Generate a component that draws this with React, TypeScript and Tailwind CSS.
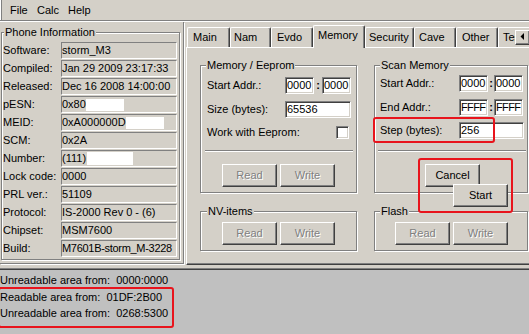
import React from "react";

const etched = "border border-[#808080] shadow-[inset_1px_1px_0_#fff,1px_1px_0_#fff]";

function RO({ children, cls = "" }: { children?: React.ReactNode; cls?: string }) {
  return (
    <div
      className={`w-[116px] h-[17px] shrink-0 border border-t-[#808080] border-l-[#808080] border-b-white border-r-white flex items-center whitespace-nowrap overflow-hidden ${cls}`}
    >
      {children}
    </div>
  );
}

function Row({ label, children, cls }: { label: string; children?: React.ReactNode; cls?: string }) {
  return (
    <div className="flex h-[17px] items-center">
      <span className="w-[59px] pl-[1px] shrink-0 whitespace-nowrap">{label}</span>
      <RO cls={cls}>{children}</RO>
    </div>
  );
}

function Edit({ w, children, cls = "" }: { w: string; children?: React.ReactNode; cls?: string }) {
  return (
    <div
      className={`${w} h-[17px] shrink-0 bg-white border border-t-[#808080] border-l-[#808080] border-b-white border-r-white shadow-[inset_1px_1px_0_#404040,inset_-1px_-1px_0_#d4d0c8] pl-[1px] flex items-center whitespace-nowrap overflow-hidden ${cls}`}
    >
      {children}
    </div>
  );
}

function Btn({ children, disabled }: { children: React.ReactNode; disabled?: boolean }) {
  return (
    <div
      className={`w-[55px] h-[23px] shrink-0 bg-[#d4d0c8] border border-t-white border-l-white border-b-[#404040] border-r-[#404040] shadow-[inset_-1px_-1px_0_#808080] flex items-center justify-center ${
        disabled ? "text-[#808080] [text-shadow:1px_1px_0_#ffffff]" : "text-black"
      }`}
    >
      {children}
    </div>
  );
}

function Tab({ w, pl, label, selected }: { w: string; pl: string; label: string; selected?: boolean }) {
  return (
    <div
      className={`${w} ${pl} shrink-0 bg-[#d4d0c8] border-t border-l border-white border-r border-r-[#404040] shadow-[inset_-1px_0_0_#808080] rounded-t-[2px] pt-[3px] whitespace-nowrap overflow-hidden ${
        selected ? "h-[23px] -mb-px relative z-10" : "h-[20px]"
      }`}
    >
      {label}
    </div>
  );
}

function Sep() {
  return <div className="-ml-[2px] w-[148px] h-[2px] border-t border-[#808080] border-b border-b-white" />;
}

function Mask({ w, h = "h-[12px]" }: { w: string; h?: string }) {
  return <span className={`block shrink-0 ${w} ${h} bg-white`} />;
}

export default function App() {
  return (
    <div className="relative w-[529px] h-[334px] overflow-hidden bg-[#d4d0c8] flex flex-col font-['Liberation_Sans',Arial,sans-serif] text-[11px] leading-[13px] text-black">
      {/* menu bar */}
      <div className="h-[20px] flex items-center shrink-0">
        <div className="w-[2px] h-[20px] border-l border-white border-r border-r-[#808080]" />
        <span className="ml-[8px] w-[27px]">File</span>
        <span className="w-[31px]">Calc</span>
        <span>Help</span>
      </div>
      <div className="h-px bg-[#808080] shrink-0" />
      <div className="h-px bg-white shrink-0" />

      {/* main area */}
      <div className="h-[246px] flex shrink-0">
        {/* left panel */}
        <div className="w-[184px] h-[242px] shrink-0 border-r border-b border-[#808080] shadow-[1px_1px_0_#fff]">
          <fieldset className={`ml-[1px] mt-[4px] w-[179px] h-[234px] ${etched}`}>
            <legend className="ml-[2px] px-[1px] bg-[#d4d0c8] leading-[13px]">Phone Information</legend>
            <div className="mt-[3px] flex flex-col gap-[1px]">
              <Row label="Software:">storm_M3</Row>
              <Row label="Compiled:">Jan 29 2009 23:17:33</Row>
              <Row label="Released:">Dec 16 2008 14:00:00</Row>
              <Row label="pESN:">
                <span className="shrink-0">0x80</span>
                <Mask w="w-[38px]" />
              </Row>
              <Row label="MEID:">
                <span className="shrink-0">0xA000000D</span>
                <Mask w="w-[38px]" />
              </Row>
              <Row label="SCM:">0x2A</Row>
              <Row label="Number:">
                <span className="shrink-0">(111)</span>
                <span className="block shrink-0 ml-[1px] w-[46px] h-[13px] bg-white" />
              </Row>
              <Row label="Lock code:">0000</Row>
              <Row label="PRL ver.:">51109</Row>
              <Row label="Protocol:">IS-2000 Rev 0 - (6)</Row>
              <Row label="Chipset:">MSM7600</Row>
              <Row label="Build:" cls="tracking-[-0.3px]">M7601B-storm_M-3228</Row>
            </div>
          </fieldset>
        </div>

        {/* tab control */}
        <div className="ml-[2px] flex flex-col w-[343px] shrink-0">
          <div className="relative h-[25px] flex items-end pl-[1px]">
            <Tab w="w-[43px]" pl="pl-[5px]" label="Main" />
            <Tab w="w-[41px]" pl="pl-[3px]" label="Nam" />
            <Tab w="w-[42px]" pl="pl-[5px]" label="Evdo" />
            <Tab w="w-[52px]" pl="pl-[4px]" label="Memory" selected />
            <Tab w="w-[49px]" pl="pl-[3px]" label="Security" />
            <Tab w="w-[42px]" pl="pl-[4px]" label="Cave" />
            <Tab w="w-[42px]" pl="pl-[5px]" label="Other" />
            <Tab w="w-[42px]" pl="pl-[4px]" label="Test" />
            <div className="absolute left-[329px] top-[8px] w-[15px] h-[15px] bg-[#d4d0c8] border border-t-white border-l-white border-b-[#404040] border-r-[#404040] shadow-[inset_-1px_-1px_0_#808080] z-20 flex items-center justify-center">
              <svg width="4" height="7" viewBox="0 0 4 7" className="-mt-[3px] -ml-[1px]">
                <polygon points="4,0 4,7 0.5,3.5" fill="#000" />
              </svg>
            </div>
          </div>
          <div className="h-[218px] w-[360px] border-t border-l border-white border-b border-b-[#404040] shadow-[inset_0_-1px_0_#808080]">
            <div className="flex pl-[13px] pt-[11px]">
              {/* Memory / Eeprom */}
              <fieldset className={`w-[157px] h-[134px] shrink-0 ${etched}`}>
                <legend className="ml-[5px] px-[1px] bg-[#d4d0c8] leading-[13px]">Memory / Eeprom</legend>
                <div className="flex flex-col pl-[6px]">
                  <div className="mt-[5px] flex items-center h-[17px]">
                    <span className="w-[78px] shrink-0">Start Addr.:</span>
                    <Edit w="w-[29px]">0000</Edit>
                    <span className="w-[8px] text-center font-bold">:</span>
                    <Edit w="w-[29px]">0000</Edit>
                  </div>
                  <div className="mt-[7px] flex items-center h-[17px]">
                    <span className="w-[78px] shrink-0">Size (bytes):</span>
                    <Edit w="w-[66px]">65536</Edit>
                  </div>
                  <div className="mt-[8px] flex items-center h-[13px]">
                    <span className="w-[129px] shrink-0">Work with Eeprom:</span>
                    <div className="w-[13px] h-[13px] bg-white border border-t-[#808080] border-l-[#808080] border-b-white border-r-white shadow-[inset_1px_1px_0_#404040,inset_-1px_-1px_0_#d4d0c8]" />
                  </div>
                  <div className="mt-[11px]">
                    <Sep />
                  </div>
                  <div className="mt-[12px] ml-[15px] flex gap-[3px]">
                    <Btn disabled>Read</Btn>
                    <Btn disabled>Write</Btn>
                  </div>
                </div>
              </fieldset>

              {/* Scan Memory */}
              <fieldset className={`ml-[17px] w-[154px] h-[134px] shrink-0 ${etched}`}>
                <legend className="ml-[5px] px-[1px] bg-[#d4d0c8] leading-[13px]">Scan Memory</legend>
                <div className="flex flex-col pl-[5px]">
                  <div className="mt-[3px] flex items-center h-[17px]">
                    <span className="w-[79px] shrink-0">Start Addr.:</span>
                    <Edit w="w-[29px]">0000</Edit>
                    <span className="w-[6px] text-center font-bold">:</span>
                    <Edit w="w-[29px]">0000</Edit>
                  </div>
                  <div className="mt-[7px] flex items-center h-[17px]">
                    <span className="w-[79px] shrink-0">End Addr.:</span>
                    <Edit w="w-[29px]" cls="tracking-[-0.6px]">FFFF</Edit>
                    <span className="w-[6px] text-center font-bold">:</span>
                    <Edit w="w-[29px]" cls="tracking-[-0.6px]">FFFF</Edit>
                  </div>
                  <div className="mt-[6px] flex items-center h-[17px]">
                    <span className="w-[79px] shrink-0">Step (bytes):</span>
                    <Edit w="w-[65px]">256</Edit>
                  </div>
                  <div className="mt-[11px]">
                    <Sep />
                  </div>
                  <div className="mt-[12px] ml-[45px] relative w-[55px]">
                    <Btn>Cancel</Btn>
                    <div className="absolute left-[28px] top-[20px] z-10">
                      <Btn>Start</Btn>
                    </div>
                  </div>
                </div>
              </fieldset>
            </div>

            <div className="flex pl-[13px] mt-[12px]">
              <fieldset className={`w-[157px] h-[46px] shrink-0 ${etched}`}>
                <legend className="ml-[6px] px-[1px] bg-[#d4d0c8] leading-[13px]">NV-items</legend>
                <div className="mt-[4px] ml-[21px] flex gap-[3px]">
                  <Btn disabled>Read</Btn>
                  <Btn disabled>Write</Btn>
                </div>
              </fieldset>
              <fieldset className={`ml-[17px] w-[154px] h-[46px] shrink-0 ${etched}`}>
                <legend className="ml-[5px] px-[1px] bg-[#d4d0c8] leading-[13px]">Flash</legend>
                <div className="mt-[4px] ml-[20px] flex gap-[3px]">
                  <Btn disabled>Read</Btn>
                  <Btn disabled>Write</Btn>
                </div>
              </fieldset>
            </div>
          </div>
        </div>
      </div>

      <div className="h-[2px] shrink-0 border-t border-[#808080] border-b border-b-[#404040]" />

      {/* status */}
      <div className="flex-1 bg-[#c0c0c0] pt-[2px] leading-[16.5px] whitespace-pre">
        <div>Unreadable area from:  0000:0000</div>
        <div>Readable area from:  01DF:2B00</div>
        <div>Unreadable area from:  0268:5300</div>
      </div>

      {/* annotation boxes */}
      <div className="absolute left-[373px] top-[117px] w-[122px] h-[26px] border-2 border-[#e8141c] rounded-[3px] z-30" />
      <div className="absolute left-[418px] top-[158px] w-[95px] h-[55px] border-2 border-[#e8141c] rounded-[3px] z-30" />
      <div className="absolute left-[-2px] top-[287px] w-[176px] h-[41px] border-2 border-[#e8141c] rounded-[3px] z-30" />
    </div>
  );
}
